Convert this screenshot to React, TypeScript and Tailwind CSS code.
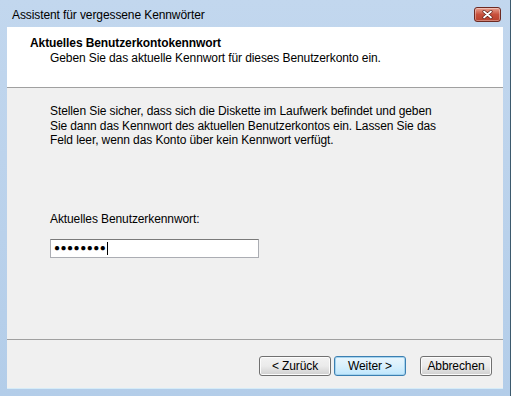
import React from "react";

const FONT = { fontFamily: '"Liberation Sans", Arial, sans-serif' };

function CloseButton() {
  return (
    <div className="w-[27px] h-[15px] rounded-[3px] border border-[#6d2a22] bg-gradient-to-b from-[#e8a090] via-[#c7503c] to-[#b8402c] flex items-center justify-center shadow-[inset_0_0_0_1px_rgba(255,255,255,0.35)]">
      <svg width="11" height="9" viewBox="0 0 11 9">
        <path d="M2 1.5 L9 7.5 M9 1.5 L2 7.5" stroke="#5a1a12" strokeWidth="3" strokeLinecap="round" />
        <path d="M2 1.5 L9 7.5 M9 1.5 L2 7.5" stroke="#ffffff" strokeWidth="1.8" strokeLinecap="round" />
      </svg>
    </div>
  );
}

function WizardButton({ label, primary }: { label: string; primary?: boolean }) {
  return (
    <div
      className={`w-[72px] h-[20px] rounded-[3px] border flex items-center justify-center text-[12px] text-black bg-gradient-to-b ${
        primary
          ? "border-[#3c7fb1] from-[#eaf6fd] via-[#d9f0fc] to-[#bee6fd] shadow-[inset_0_0_0_1px_#a4d3ee]"
          : "border-[#707070] from-[#f2f2f2] via-[#ebebeb] to-[#cfcfcf] shadow-[inset_0_0_0_1px_#fcfcfc]"
      }`}
    >
      {label}
    </div>
  );
}

export default function App() {
  return (
    <div className="w-[514px] h-[396px] flex bg-white tracking-[-0.1px]" style={FONT}>
      <div className="w-[511px] h-[396px] flex flex-col bg-gradient-to-b from-[#c2d7ee] to-[#b3cde9] border-r border-[#3d5a6e]">
        {/* title bar */}
        <div className="h-[27px] flex items-start justify-between pl-[12px] pr-[9px] pt-[8px] shrink-0">
          <span className="text-[12px] leading-[15px] text-black">Assistent für vergessene Kennwörter</span>
          <div className="mt-[-1px]">
            <CloseButton />
          </div>
        </div>

        <div className="flex-1 flex flex-col ml-[7px] mr-[7px] mb-[7px] bg-[#f0f0f0] border-b border-[#d6ecf8]">
          {/* header */}
          <div className="h-[61px] bg-white border-b border-[#a0a0a0] pt-[9px] pl-[23px] text-[12px] text-black shrink-0">
            <div className="font-bold leading-[15px]">Aktuelles Benutzerkontokennwort</div>
            <div className="pl-[20px] leading-[15px]">Geben Sie das aktuelle Kennwort für dieses Benutzerkonto ein.</div>
          </div>

          {/* content */}
          <div className="h-[252px] border-b border-[#a0a0a0] pl-[43px] pt-[16px] text-[12px] text-black shrink-0">
            <p className="leading-[14.5px]">
              Stellen Sie sicher, dass sich die Diskette im Laufwerk befindet und geben
              <br />
              Sie dann das Kennwort des aktuellen Benutzerkontos ein. Lassen Sie das
              <br />
              Feld leer, wenn das Konto über kein Kennwort verfügt.
            </p>
            <div className="mt-[64px] leading-[15px]">Aktuelles Benutzerkennwort:</div>
            <div className="mt-[12px] w-[209px] h-[19px] bg-white border border-[#abadb3] border-t-[#7a7a7a] flex items-center pl-[3px]">
              <span className="text-[10px] tracking-[0.5px] leading-none">●●●●●●●●</span>
              <span className="w-px h-[13px] bg-black ml-px" />
            </div>
          </div>

          {/* footer */}
          <div className="flex-1 flex items-start justify-end pt-[16px] pr-[11px]">
            <WizardButton label="< Zurück" />
            <div className="ml-[3px]">
              <WizardButton label="Weiter >" primary />
            </div>
            <div className="ml-[14px]">
              <WizardButton label="Abbrechen" />
            </div>
          </div>
        </div>
      </div>
    </div>
  );
}
